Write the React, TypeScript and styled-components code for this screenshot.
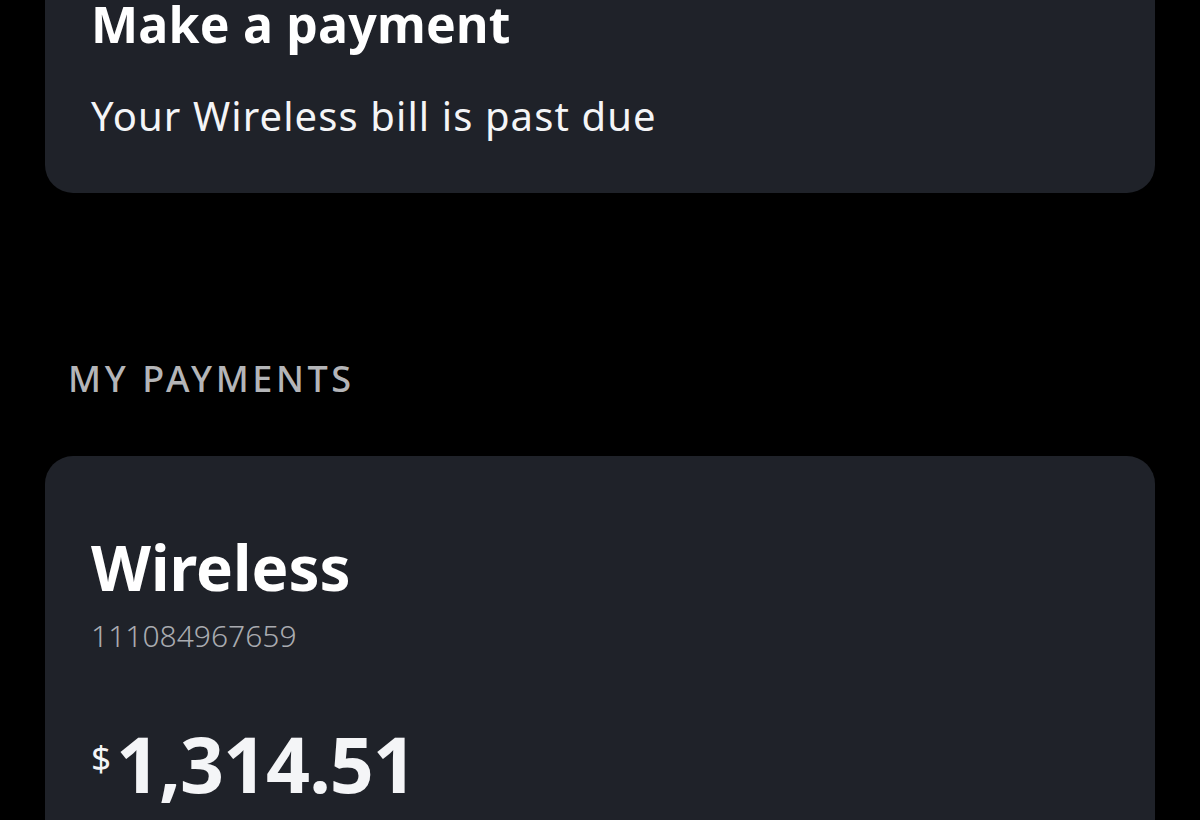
import React from "react";
import styled, { createGlobalStyle } from "styled-components";

const Global = createGlobalStyle`
  html, body { margin: 0; padding: 0; background: #000; }
  body { font-family: "Noto Sans", "Open Sans", sans-serif; color: #f4f5f7; overflow: hidden; }
`;

const Page = styled.div`
  display: flex;
  flex-direction: column;
  padding: 0 45px;
  height: 820px;
  overflow: hidden;
`;

const Card = styled.section<{ $top?: boolean }>`
  background: #1f2229;
  border-radius: 28px;
  padding: ${(p) => (p.$top ? "42px 46px 54px" : "71px 46px 60px")};
  margin-top: ${(p) => (p.$top ? "-40px" : "0")};
  display: flex;
  flex-direction: column;
  flex-shrink: 0;
`;

const Title = styled.h2`
  margin: 0;
  font-size: 50px;
  line-height: 44px;
  font-weight: 700;
  letter-spacing: 0.2px;
  color: #fff;
`;

const Subtitle = styled.p`
  margin: 47px 0 0;
  font-size: 40px;
  line-height: 46px;
  font-weight: 400;
  letter-spacing: 1.1px;
  color: #f4f5f7;
`;

const SectionLabel = styled.h3`
  margin: 164px 0 55px 23px;
  font-size: 36px;
  line-height: 44px;
  font-weight: 500;
  letter-spacing: 3.6px;
  color: #b4b5b8;
`;

const AccountName = styled.div`
  font-size: 62px;
  line-height: 80px;
  font-weight: 700;
  color: #fff;
`;

const AccountNumber = styled.div`
  margin-top: 11px;
  font-size: 30px;
  line-height: 36px;
  font-weight: 300;
  color: #a9abb0;
`;

const Amount = styled.div`
  margin-top: 65px;
  display: flex;
  align-items: flex-start;
  color: #f4f5f7;
`;

const Currency = styled.span`
  font-size: 35px;
  line-height: 34px;
  font-weight: 400;
  margin-top: 22px;
  margin-right: 5px;
`;

const Value = styled.span`
  font-size: 77px;
  line-height: 90px;
  font-weight: 700;
  letter-spacing: -1px;
`;

export default function App() {
  return (
    <>
      <Global />
      <Page>
        <Card $top>
          <Title>Make a payment</Title>
          <Subtitle>Your Wireless bill is past due</Subtitle>
        </Card>
        <SectionLabel>MY PAYMENTS</SectionLabel>
        <Card>
          <AccountName>Wireless</AccountName>
          <AccountNumber>111084967659</AccountNumber>
          <Amount>
            <Currency>$</Currency>
            <Value>1,314.51</Value>
          </Amount>
        </Card>
      </Page>
    </>
  );
}
